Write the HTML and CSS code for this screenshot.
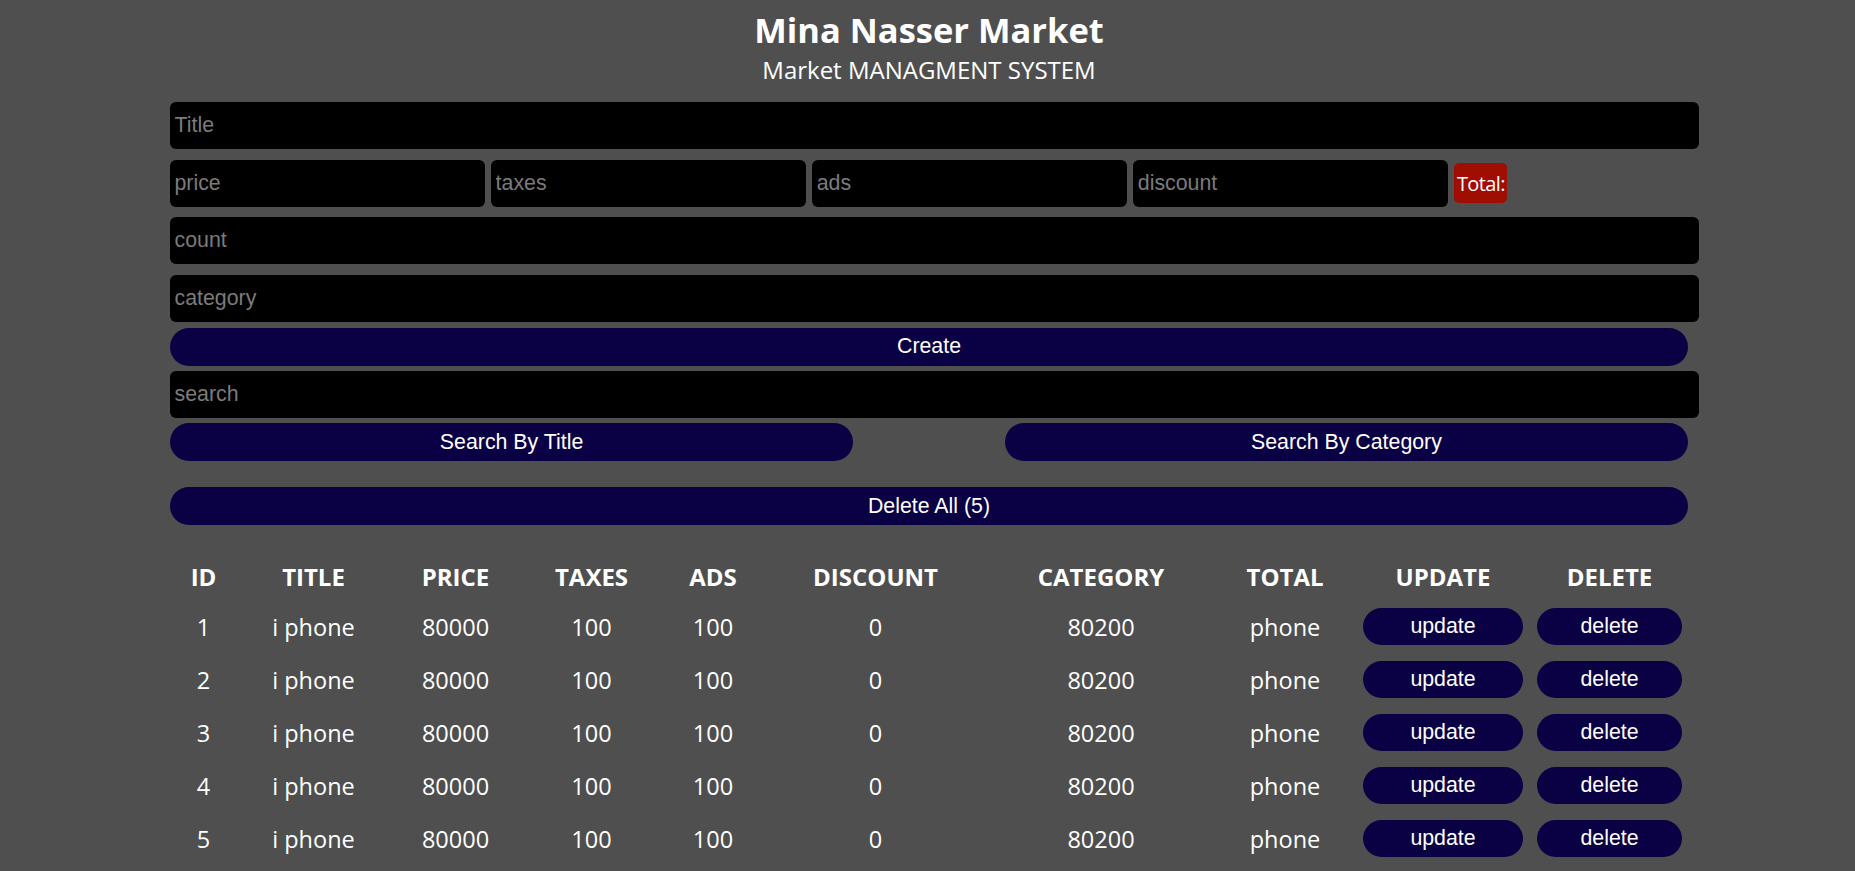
FILE: index.html
```html
<!DOCTYPE html>
<html lang="en">
<head>
<meta charset="utf-8">
<title>Mina Nasser Market</title>
<link rel="stylesheet" href="styles.css">
</head>
<body>
<div class="crud">
  <header class="head">
    <h1 class="title">Mina Nasser Market</h1>
    <p class="subtitle">Market MANAGMENT SYSTEM</p>
  </header>
  <div class="form">
    <input class="field" type="text" placeholder="Title">
    <div class="price-row">
      <input class="field small" type="number" placeholder="price">
      <input class="field small" type="number" placeholder="taxes">
      <input class="field small" type="number" placeholder="ads">
      <input class="field small" type="number" placeholder="discount">
      <span class="total">Total:</span>
    </div>
    <input class="field" type="number" placeholder="count">
    <input class="field" type="text" placeholder="category">
    <button class="btn create">Create</button>
    <input class="field" type="text" placeholder="search">
    <div class="search-row">
      <button class="btn half">Search By Title</button>
      <button class="btn half">Search By Category</button>
    </div>
    <button class="btn delete-all">Delete All (5)</button>
  </div>
  <table class="outputs">
    <colgroup>
      <col class="c-id"><col class="c-title"><col class="c-price"><col class="c-taxes"><col class="c-ads"><col class="c-discount"><col class="c-category"><col class="c-total"><col class="c-update"><col class="c-delete">
    </colgroup>
    <thead>
      <tr><th>id</th><th>title</th><th>price</th><th>taxes</th><th>ads</th><th>discount</th><th>category</th><th>total</th><th>update</th><th>delete</th></tr>
    </thead>
    <tbody>
      <tr><td>1</td><td>i phone</td><td>80000</td><td>100</td><td>100</td><td>0</td><td>80200</td><td>phone</td><td><button class="btn row-btn">update</button></td><td class="del-cell"><button class="btn row-btn">delete</button></td></tr>
      <tr><td>2</td><td>i phone</td><td>80000</td><td>100</td><td>100</td><td>0</td><td>80200</td><td>phone</td><td><button class="btn row-btn">update</button></td><td class="del-cell"><button class="btn row-btn">delete</button></td></tr>
      <tr><td>3</td><td>i phone</td><td>80000</td><td>100</td><td>100</td><td>0</td><td>80200</td><td>phone</td><td><button class="btn row-btn">update</button></td><td class="del-cell"><button class="btn row-btn">delete</button></td></tr>
      <tr><td>4</td><td>i phone</td><td>80000</td><td>100</td><td>100</td><td>0</td><td>80200</td><td>phone</td><td><button class="btn row-btn">update</button></td><td class="del-cell"><button class="btn row-btn">delete</button></td></tr>
      <tr><td>5</td><td>i phone</td><td>80000</td><td>100</td><td>100</td><td>0</td><td>80200</td><td>phone</td><td><button class="btn row-btn">update</button></td><td class="del-cell"><button class="btn row-btn">delete</button></td></tr>
    </tbody>
  </table>
</div>
</body>
</html>
```

FILE: styles.css
```css
* {
  box-sizing: border-box;
}

html, body {
  margin: 0;
  padding: 0;
  background: #4f4f4f;
  color: #ffffff;
  font-family: "Open Sans", "Noto Sans", sans-serif;
}

.crud {
  width: 1518px;
  margin: 0 0 0 170px;
  padding-top: 5.5px;
}

.head {
  text-align: center;
  margin-bottom: 11.25px;
}

.title {
  margin: 0;
  font-size: 34.5px;
  line-height: 47px;
  font-weight: 700;
}

.subtitle {
  margin: 0;
  font-size: 24px;
  line-height: 33px;
  font-weight: 400;
}

.form {
  display: flex;
  flex-direction: column;
  align-items: flex-start;
}

.field {
  display: block;
  width: calc(100% + 11px);
  height: 47px;
  margin: 5.25px 0;
  padding: 0 4.5px;
  border: none;
  outline: none;
  border-radius: 6px;
  background: #000000;
  color: #ffffff;
  font-family: "Liberation Sans", Arial, sans-serif;
  font-size: 21.33px;
  -moz-appearance: textfield;
}

.field::-webkit-outer-spin-button,
.field::-webkit-inner-spin-button {
  -webkit-appearance: none;
  margin: 0;
}

.field::placeholder {
  color: #7b7b7b;
  opacity: 1;
}

.price-row {
  display: flex;
  align-items: center;
  gap: 6.5px;
  width: 100%;
}

.field.small {
  width: calc(20% + 11px);
  flex: none;
}

.total {
  display: flex;
  align-items: center;
  justify-content: center;
  width: 53px;
  height: 40px;
  background: #a00d02;
  border-radius: 5px;
  font-family: "Open Sans", "Noto Sans", sans-serif;
  font-size: 20px;
  letter-spacing: -0.6px;
  color: #ffffff;
  white-space: nowrap;
}

.btn {
  display: block;
  width: 100%;
  height: 38px;
  border: none;
  border-radius: 32px;
  background: #0a0044;
  color: #ffffff;
  font-family: "Liberation Sans", Arial, sans-serif;
  font-size: 21.33px;
  padding: 0;
  cursor: pointer;
}

.btn.create {
  margin-top: 0.75px;
}

.search-row {
  display: flex;
  justify-content: space-between;
  width: 100%;
}

.btn.half {
  width: 45%;
}

.delete-all {
  margin-top: 26px;
}

.outputs {
  width: 100%;
  margin-top: 28px;
  border-collapse: collapse;
  table-layout: fixed;
  text-align: center;
}

.c-id { width: 67px; }
.c-title { width: 153px; }
.c-price { width: 131px; }
.c-taxes { width: 141px; }
.c-ads { width: 102px; }
.c-discount { width: 223px; }
.c-category { width: 228px; }
.c-total { width: 140px; }
.c-update { width: 176px; }
.c-delete { width: 157px; }

.outputs th {
  padding: 7px 0;
  line-height: 33px;
  font-size: 24px;
  font-weight: 700;
  text-transform: uppercase;
}

.outputs td {
  padding: 8px 8px;
  height: 53px;
  font-size: 23.5px;
  line-height: 32px;
  vertical-align: middle;
}

.outputs td.del-cell {
  padding: 8px 6px;
}

.row-btn {
  height: 37px;
  font-size: 21.33px;
}
```
